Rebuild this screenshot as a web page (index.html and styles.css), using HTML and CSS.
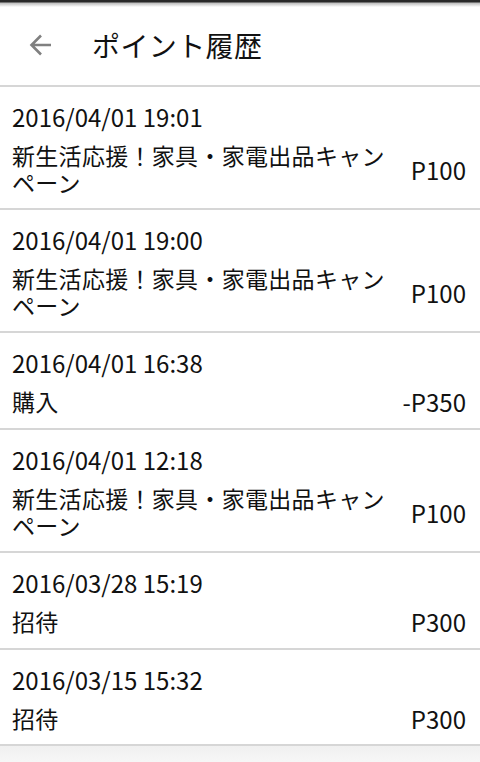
FILE: index.html
```html
<!DOCTYPE html>
<html lang="ja">
<head>
<meta charset="UTF-8">
<meta name="viewport" content="width=device-width, initial-scale=1.0">
<title>ポイント履歴</title>
<link rel="stylesheet" href="styles.css">
</head>
<body>

<div class="topbar"></div>

<header class="header">
    <button class="back" type="button" aria-label="戻る">
        <svg width="26" height="26" viewBox="0 0 26 26">
            <path d="M23 13H4M13 3.5L3.5 13L13 22.5" fill="none" stroke="#808080" stroke-width="2.6"/>
        </svg>
    </button>
    <h1 class="title">ポイント履歴</h1>
</header>

<ul class="history">
    <li class="item">
        <div class="date">2016/04/01 19:01</div>
        <div class="line">
            <span class="name">新生活応援！家具・家電出品キャンペーン</span>
            <span class="amount">P100</span>
        </div>
    </li>
    <li class="item">
        <div class="date">2016/04/01 19:00</div>
        <div class="line">
            <span class="name">新生活応援！家具・家電出品キャンペーン</span>
            <span class="amount">P100</span>
        </div>
    </li>
    <li class="item">
        <div class="date">2016/04/01 16:38</div>
        <div class="line">
            <span class="name">購入</span>
            <span class="amount">-P350</span>
        </div>
    </li>
    <li class="item">
        <div class="date">2016/04/01 12:18</div>
        <div class="line">
            <span class="name">新生活応援！家具・家電出品キャンペーン</span>
            <span class="amount">P100</span>
        </div>
    </li>
    <li class="item">
        <div class="date">2016/03/28 15:19</div>
        <div class="line">
            <span class="name">招待</span>
            <span class="amount">P300</span>
        </div>
    </li>
    <li class="item">
        <div class="date">2016/03/15 15:32</div>
        <div class="line">
            <span class="name">招待</span>
            <span class="amount">P300</span>
        </div>
    </li>
</ul>

<div class="footer"></div>

</body>
</html>
```

FILE: styles.css
```css
body {
    font-family: "Noto Sans CJK JP", "Noto Sans", sans-serif;
    background-color: #fff;
    color: #111;
    margin: 0;
    padding: 0;
    width: 480px;
}

.topbar {
    height: 7px;
    background: linear-gradient(#2a2a2a 0, #2a2a2a 2px, #bdbdbd 3px, #fff 7px);
}

.header {
    display: flex;
    align-items: center;
    height: 80px;
    padding-bottom: 2px;
    box-sizing: border-box;
    border-bottom: 2px solid #d6d6d6;
}

.back {
    background: none;
    border: none;
    padding: 0;
    margin-left: 28px;
    width: 26px;
    height: 26px;
    display: flex;
}

.title {
    margin: 0 0 0 38px;
    font-size: 28px;
    font-weight: 400;
    line-height: 1;
    letter-spacing: 0.4px;
}

.history {
    list-style: none;
    margin: 0;
    padding: 0;
}

.item {
    padding: 16px 14px 12px 12px;
    border-bottom: 2px solid #d6d6d6;
}

.item:nth-child(3),
.item:nth-child(5) {
    padding-bottom: 13px;
}

.date {
    font-size: 24px;
    line-height: 28px;
    margin-bottom: 11px;
}

.line {
    display: flex;
    align-items: center;
    font-size: 23px;
    line-height: 27px;
}

.name {
    flex: 1;
    letter-spacing: 0.3px;
}

.amount {
    flex: none;
    padding-left: 24px;
    font-size: 24px;
}

.footer {
    height: 20px;
    background: linear-gradient(#f0f0f0, #f8f8f8);
}
```
